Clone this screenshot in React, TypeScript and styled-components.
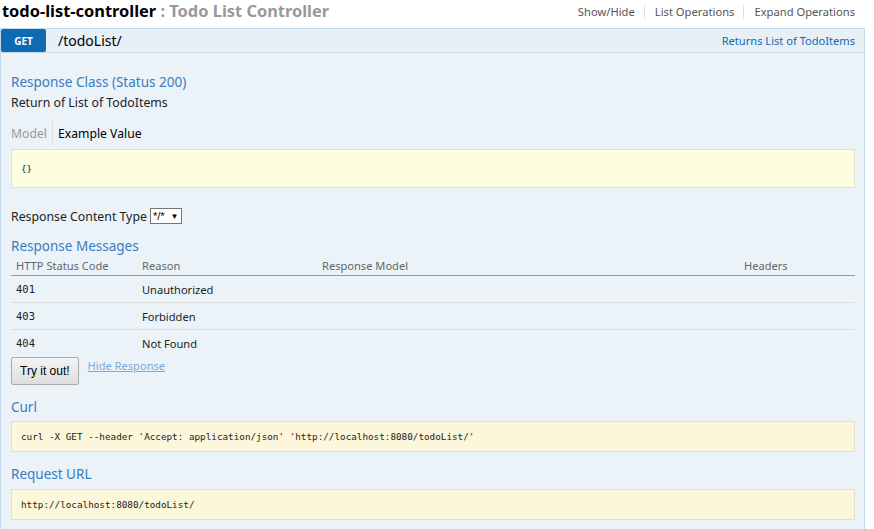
import React from "react";
import styled, { createGlobalStyle } from "styled-components";

const Global = createGlobalStyle`
  html, body { margin: 0; padding: 0; background: #fff; }
  body { font-family: "Noto Sans", "Open Sans", sans-serif; color: #222; }
`;

const Page = styled.div`
  width: 865px;
  padding: 0;
`;

const Heading = styled.div`
  display: flex;
  align-items: flex-start;
  justify-content: space-between;
  height: 28px;
  padding: 0 10px 0 2px;
`;

const Title = styled.h2`
  margin: 0;
  font-size: 16.4px;
  font-weight: bold;
  color: #000;
  line-height: 21px;
`;

const Subtitle = styled.span`
  color: #999;
`;

const Links = styled.ul`
  display: flex;
  list-style: none;
  margin: 0;
  padding: 5px 0 0 0;
`;

const LinkItem = styled.li<{ $first?: boolean }>`
  font-size: 11.2px;
  color: #555;
  padding: 0 9px 0 10px;
  border-left: ${(p) => (p.$first ? "none" : "1px solid #ddd")};
  line-height: 14px;
  &:last-child { padding-right: 0; }
`;

const OpBar = styled.div`
  display: flex;
  align-items: stretch;
  height: 23px;
  background: #e7f0f7;
  border: 1px solid #c3d9ec;
  border-bottom: none;
`;

const Method = styled.span`
  display: flex;
  align-items: center;
  justify-content: center;
  width: 45px;
  background: #0f6ab4;
  color: #fff;
  font-size: 10px;
  font-weight: bold;
  border-radius: 2px;
  margin-right: 12px;
`;

const Path = styled.span`
  flex: 1;
  display: flex;
  align-items: center;
  font-size: 14px;
  color: #000;
`;

const Summary = styled.span`
  display: flex;
  align-items: center;
  font-size: 11.1px;
  color: #0f6ab4;
  padding-right: 9px;
`;

const Panel = styled.div`
  background: #ebf3f9;
  border: 1px solid #c3d9ec;
  padding: 14px 9px 12px 10px;
  min-height: 470px;
`;

const SectionTitle = styled.h4<{ $mt?: number }>`
  margin: ${(p) => p.$mt ?? 0}px 0 0 0;
  font-size: 13.5px;
  font-weight: normal;
  color: #3a7bbf;
  line-height: 20px;
`;

const Text = styled.div`
  font-size: 12.3px;
  line-height: 18px;
  margin-top: 2px;
  color: #222;
`;

const Tabs = styled.div`
  display: flex;
  align-items: center;
  margin-top: 10px;
  height: 23px;
`;

const Tab = styled.span<{ $active?: boolean }>`
  font-size: 12.2px;
  color: ${(p) => (p.$active ? "#000" : "#999")};
  padding: 0 5px 0 ${(p) => (p.$active ? 5 : 0)}px;
  border-left: ${(p) => (p.$active ? "1px solid #ddd" : "none")};
  line-height: 23px;
`;

const CodeBox = styled.pre<{ $tint?: string; $h: number; $mt: number }>`
  margin: ${(p) => p.$mt}px 0 0 0;
  height: ${(p) => p.$h}px;
  box-sizing: border-box;
  background: ${(p) => p.$tint ?? "#fcf6db"};
  border: 1px solid #e5e0c6;
  padding: 0 9px;
  display: flex;
  align-items: center;
  font-family: "DejaVu Sans Mono", "Liberation Mono", monospace;
  font-size: 9.3px;
  color: #222;
`;

const ContentType = styled.div`
  display: flex;
  align-items: center;
  margin-top: 19px;
  font-size: 12.3px;
  gap: 3px;
  height: 18px;
`;

const Select = styled.span`
  display: inline-flex;
  align-items: center;
  gap: 6px;
  height: 14px;
  padding: 0 3px 0 2px;
  border: 1px solid #767676;
  background: #fff;
  font-family: "Liberation Sans", Arial, sans-serif;
  font-size: 11px;
  color: #000;
`;

const Arrow = styled.span`
  font-size: 8px;
`;

const Table = styled.table`
  width: 100%;
  border-collapse: collapse;
  margin-top: -1px;
`;

const Th = styled.th<{ $w?: number }>`
  text-align: left;
  font-weight: normal;
  font-size: 11.1px;
  color: #666;
  padding: 1px 0 0 5px;
  height: 19px;
  border-bottom: 1px solid #999;
  width: ${(p) => (p.$w ? `${p.$w}px` : "auto")};
`;

const Td = styled.td<{ $mono?: boolean; $last?: boolean }>`
  height: 26px;
  padding: 0 0 0 5px;
  border-bottom: ${(p) => (p.$last ? "none" : "1px solid #ddd")};
  font-family: ${(p) => (p.$mono ? '"DejaVu Sans Mono", monospace' : "inherit")};
  font-size: ${(p) => (p.$mono ? "10.5px" : "11.1px")};
  color: #222;
`;

const Actions = styled.div`
  display: flex;
  align-items: flex-start;
  gap: 9px;
  margin-top: 1px;
`;

const TryButton = styled.button`
  font-family: "Liberation Sans", Arial, sans-serif;
  font-size: 12px;
  color: #000;
  height: 28px;
  padding: 0 8px;
  border: 1px solid #aaa;
  border-radius: 2px;
  background: linear-gradient(#f4f4f4, #dedede);
`;

const HideLink = styled.a`
  font-size: 11.1px;
  color: #7ea8d6;
  text-decoration: underline;
  margin-top: 1px;
`;

export default function App() {
  return (
    <>
      <Global />
      <Page>
        <Heading>
          <Title>
            todo-list-controller <Subtitle>: Todo List Controller</Subtitle>
          </Title>
          <Links>
            <LinkItem $first>Show/Hide</LinkItem>
            <LinkItem>List Operations</LinkItem>
            <LinkItem>Expand Operations</LinkItem>
          </Links>
        </Heading>
        <OpBar>
          <Method>GET</Method>
          <Path>/todoList/</Path>
          <Summary>Returns List of TodoItems</Summary>
        </OpBar>
        <Panel>
          <SectionTitle $mt={5}>Response Class (Status 200)</SectionTitle>
          <Text>Return of List of TodoItems</Text>
          <Tabs>
            <Tab>Model</Tab>
            <Tab $active>Example Value</Tab>
          </Tabs>
          <CodeBox $tint="#fdfddf" $h={39} $mt={4}>{"{}"}</CodeBox>
          <ContentType>
            Response Content Type
            <Select>
              */* <Arrow>▼</Arrow>
            </Select>
          </ContentType>
          <SectionTitle $mt={11}>Response Messages</SectionTitle>
          <Table>
            <thead>
              <tr>
                <Th $w={121}>HTTP Status Code</Th>
                <Th $w={175}>Reason</Th>
                <Th $w={417}>Response Model</Th>
                <Th>Headers</Th>
              </tr>
            </thead>
            <tbody>
              <tr>
                <Td $mono>401</Td>
                <Td>Unauthorized</Td>
                <Td />
                <Td />
              </tr>
              <tr>
                <Td $mono>403</Td>
                <Td>Forbidden</Td>
                <Td />
                <Td />
              </tr>
              <tr>
                <Td $mono $last>404</Td>
                <Td $last>Not Found</Td>
                <Td $last />
                <Td $last />
              </tr>
            </tbody>
          </Table>
          <Actions>
            <TryButton>Try it out!</TryButton>
            <HideLink>Hide Response</HideLink>
          </Actions>
          <SectionTitle $mt={12}>Curl</SectionTitle>
          <CodeBox $h={31} $mt={4}>
            curl -X GET --header 'Accept: application/json' 'http://localhost:8080/todoList/'
          </CodeBox>
          <SectionTitle $mt={12}>Request URL</SectionTitle>
          <CodeBox $h={31} $mt={5}>http://localhost:8080/todoList/</CodeBox>
        </Panel>
      </Page>
    </>
  );
}
